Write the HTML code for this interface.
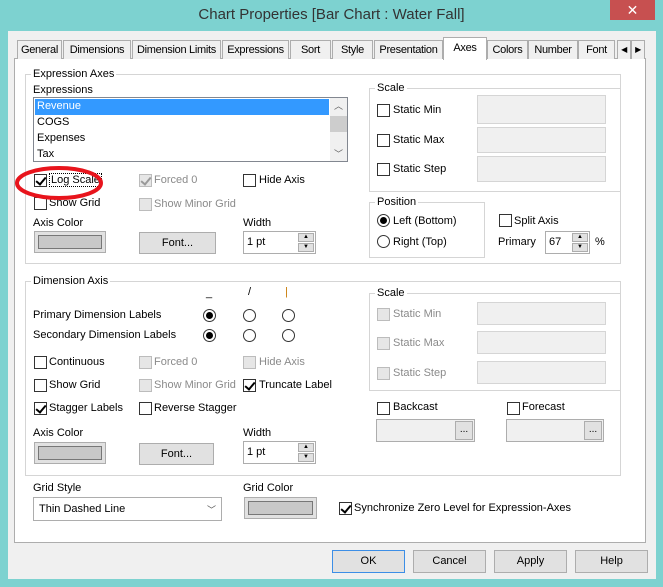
<!DOCTYPE html>
<html><head><meta charset="utf-8"><style>
*{box-sizing:border-box;margin:0;padding:0}
body{width:663px;height:587px;background:#7dd2d0;font-family:"Liberation Sans",Arial,sans-serif;font-size:11px;color:#000;position:relative;overflow:hidden}
.a{position:absolute;white-space:nowrap}
.cb{position:absolute;width:13px;height:13px;border:1px solid #333;background:#fff}
.cb.d{border-color:#bcbcbc;background:#e6e6e6}
.ck::after{content:"";position:absolute;left:3px;top:0px;width:4px;height:8px;border:solid #000;border-width:0 2px 2px 0;transform:rotate(40deg)}
.cb.d.ck::after{border-color:#999}
.g{color:#8a8a8a}
.grp{position:absolute;border:1px solid #d5d5d5}
.lbl{position:absolute;background:#fff;padding:0 2px;top:-7px;left:5px;white-space:nowrap}
.fld{position:absolute;background:#f0f0f0;border:1px solid #d5d5d5}
.btn{position:absolute;background:#e1e1e1;border:1px solid #adadad;text-align:center;line-height:20px;white-space:nowrap}
.rd{position:absolute;width:13px;height:13px;border:1px solid #333;border-radius:50%;background:#fff}
.rd.on::after{content:"";position:absolute;left:2px;top:2px;width:7px;height:7px;border-radius:50%;background:#000}
.tab{position:absolute;top:40px;height:19px;background:#f0f0f0;border:1px solid #adadad;border-bottom:none;text-align:center;line-height:18px;white-space:nowrap;letter-spacing:-0.3px;overflow:hidden}
.spin{position:absolute;background:#fff;border:1px solid #adadad}
.sp{position:absolute;right:1px;width:16px;height:9px;background:#e1e1e1;border:1px solid #adadad;font-size:6px;line-height:7px;text-align:center}
.cbox{position:absolute;background:#e1e1e1;border:1px solid #adadad}
.cbox::after{content:"";position:absolute;left:3px;top:3px;right:3px;bottom:3px;background:#c8c8c8;border:1px solid #777}
</style></head><body>
<div class="a" style="left:0;top:6px;width:663px;text-align:center;font-size:15px;color:#333">Chart Properties [Bar Chart : Water Fall]</div>
<div class="a" style="left:610px;top:0;width:45px;height:20px;background:#c75050;color:#fff;text-align:center;font-size:14px;line-height:20px">✕</div>
<div class="a" style="left:8px;top:31px;width:648px;height:548px;background:#f0f0f0"></div>
<div class="a" style="left:14px;top:58px;width:632px;height:485px;background:#fff;border:1px solid #adadad"></div>
<div class="tab" style="left:17px;width:45px">General</div>
<div class="tab" style="left:63px;width:68px">Dimensions</div>
<div class="tab" style="left:132px;width:89px">Dimension Limits</div>
<div class="tab" style="left:222px;width:67px">Expressions</div>
<div class="tab" style="left:290px;width:41px">Sort</div>
<div class="tab" style="left:332px;width:41px">Style</div>
<div class="tab" style="left:374px;width:69px">Presentation</div>
<div class="tab" style="left:443px;top:37px;height:23px;width:44px;background:#fff;line-height:20px">Axes</div>
<div class="tab" style="left:487px;width:41px">Colors</div>
<div class="tab" style="left:528px;width:50px">Number</div>
<div class="tab" style="left:578px;width:37px">Font</div>
<div class="tab" style="left:617px;width:14px;font-size:8px">◀</div>
<div class="tab" style="left:631px;width:14px;font-size:8px">▶</div>

<div class="grp" style="left:25px;top:74px;width:596px;height:190px"><span class="lbl">Expression Axes</span></div>
<div class="a" style="left:33px;top:84px">Expressions</div>
<div class="a" style="left:33px;top:97px;width:315px;height:65px;border:1px solid #828790;background:#fff"></div>
<div class="a" style="left:35px;top:99px;width:294px;height:16px;background:#3399ff"></div>
<div class="a" style="left:37px;top:100px;color:#fff">Revenue</div>
<div class="a" style="left:37px;top:116px">COGS</div>
<div class="a" style="left:37px;top:132px">Expenses</div>
<div class="a" style="left:37px;top:148px">Tax</div>
<div class="a" style="left:330px;top:98px;width:17px;height:63px;background:#f0f0f0"></div>
<div class="a" style="left:330px;top:116px;width:17px;height:16px;background:#cdcdcd"></div>
<div class="a" style="left:334px;top:99px;font-size:9px;color:#606060">︿</div>
<div class="a" style="left:334px;top:147px;font-size:9px;color:#606060">﹀</div>

<div class="cb ck" style="left:34px;top:174px"></div><div class="a" style="left:49px;top:173px;border:1px dotted #000;padding:0 1px">Log Scale</div>
<div class="cb d ck" style="left:139px;top:174px"></div><div class="a g" style="left:154px;top:174px">Forced 0</div>
<div class="cb" style="left:243px;top:174px"></div><div class="a" style="left:259px;top:174px">Hide Axis</div>
<div class="cb" style="left:34px;top:197px"></div><div class="a" style="left:49px;top:197px">Show Grid</div>
<div class="cb d" style="left:139px;top:198px"></div><div class="a g" style="left:154px;top:198px">Show Minor Grid</div>
<svg class="a" style="left:13px;top:164px" width="92" height="38"><ellipse cx="46" cy="19" rx="42" ry="15" fill="none" stroke="#e8141c" stroke-width="4"/></svg>
<div class="a" style="left:33px;top:217px">Axis Color</div>
<div class="cbox" style="left:34px;top:231px;width:72px;height:22px"></div>
<div class="btn" style="left:139px;top:232px;width:77px;height:22px">Font...</div>
<div class="a" style="left:243px;top:217px">Width</div>
<div class="spin" style="left:243px;top:231px;width:73px;height:23px"><span class="a" style="left:3px;top:4px">1 pt</span><div class="sp" style="top:1px">▲</div><div class="sp" style="top:11px">▼</div></div>

<div class="grp" style="left:369px;top:88px;width:252px;height:104px"><span class="lbl">Scale</span></div>
<div class="cb" style="left:377px;top:104px"></div><div class="a" style="left:393px;top:104px">Static Min</div>
<div class="fld" style="left:477px;top:95px;width:129px;height:29px"></div>
<div class="cb" style="left:377px;top:134px"></div><div class="a" style="left:393px;top:134px">Static Max</div>
<div class="fld" style="left:477px;top:127px;width:129px;height:26px"></div>
<div class="cb" style="left:377px;top:163px"></div><div class="a" style="left:393px;top:163px">Static Step</div>
<div class="fld" style="left:477px;top:156px;width:129px;height:26px"></div>

<div class="grp" style="left:369px;top:202px;width:116px;height:56px"><span class="lbl">Position</span></div>
<div class="rd on" style="left:377px;top:214px"></div><div class="a" style="left:393px;top:215px">Left (Bottom)</div>
<div class="rd" style="left:377px;top:235px"></div><div class="a" style="left:393px;top:236px">Right (Top)</div>
<div class="cb" style="left:499px;top:214px"></div><div class="a" style="left:514px;top:215px">Split Axis</div>
<div class="a" style="left:498px;top:236px">Primary</div>
<div class="spin" style="left:545px;top:231px;width:45px;height:23px"><span class="a" style="left:3px;top:4px">67</span><div class="sp" style="top:1px">▲</div><div class="sp" style="top:11px">▼</div></div>
<div class="a" style="left:595px;top:236px">%</div>

<div class="grp" style="left:25px;top:281px;width:596px;height:195px"><span class="lbl">Dimension Axis</span></div>
<div class="a" style="left:206px;top:287px">_</div><div class="a" style="left:248px;top:286px">/</div><div class="a" style="left:285px;top:286px;color:#c87800">|</div>
<div class="a" style="left:33px;top:309px">Primary Dimension Labels</div>
<div class="a" style="left:33px;top:329px">Secondary Dimension Labels</div>
<div class="rd on" style="left:203px;top:309px"></div><div class="rd" style="left:243px;top:309px"></div><div class="rd" style="left:282px;top:309px"></div>
<div class="rd on" style="left:203px;top:329px"></div><div class="rd" style="left:243px;top:329px"></div><div class="rd" style="left:282px;top:329px"></div>
<div class="cb" style="left:34px;top:356px"></div><div class="a" style="left:49px;top:356px">Continuous</div>
<div class="cb d" style="left:139px;top:356px"></div><div class="a g" style="left:154px;top:356px">Forced 0</div>
<div class="cb d" style="left:243px;top:356px"></div><div class="a g" style="left:259px;top:356px">Hide Axis</div>
<div class="cb" style="left:34px;top:379px"></div><div class="a" style="left:49px;top:379px">Show Grid</div>
<div class="cb d" style="left:139px;top:379px"></div><div class="a g" style="left:154px;top:379px">Show Minor Grid</div>
<div class="cb ck" style="left:243px;top:379px"></div><div class="a" style="left:259px;top:379px">Truncate Label</div>
<div class="cb ck" style="left:34px;top:402px"></div><div class="a" style="left:49px;top:402px">Stagger Labels</div>
<div class="cb" style="left:139px;top:402px"></div><div class="a" style="left:154px;top:402px">Reverse Stagger</div>
<div class="a" style="left:33px;top:427px">Axis Color</div>
<div class="cbox" style="left:34px;top:442px;width:72px;height:22px"></div>
<div class="btn" style="left:139px;top:443px;width:75px;height:22px">Font...</div>
<div class="a" style="left:243px;top:427px">Width</div>
<div class="spin" style="left:243px;top:441px;width:73px;height:23px"><span class="a" style="left:3px;top:4px">1 pt</span><div class="sp" style="top:1px">▲</div><div class="sp" style="top:11px">▼</div></div>

<div class="grp" style="left:369px;top:293px;width:252px;height:98px"><span class="lbl">Scale</span></div>
<div class="cb d" style="left:377px;top:308px"></div><div class="a g" style="left:393px;top:308px">Static Min</div>
<div class="fld" style="left:477px;top:302px;width:129px;height:23px"></div>
<div class="cb d" style="left:377px;top:337px"></div><div class="a g" style="left:393px;top:337px">Static Max</div>
<div class="fld" style="left:477px;top:331px;width:129px;height:23px"></div>
<div class="cb d" style="left:377px;top:367px"></div><div class="a g" style="left:393px;top:367px">Static Step</div>
<div class="fld" style="left:477px;top:361px;width:129px;height:23px"></div>
<div class="cb" style="left:377px;top:402px"></div><div class="a" style="left:393px;top:401px">Backcast</div>
<div class="cb" style="left:507px;top:402px"></div><div class="a" style="left:522px;top:401px">Forecast</div>
<div class="a" style="left:376px;top:419px;width:99px;height:23px;border:1px solid #adadad;background:#f0f0f0"><div class="btn" style="right:1px;top:1px;width:18px;height:19px;line-height:15px;font-size:10px">...</div></div>
<div class="a" style="left:506px;top:419px;width:98px;height:23px;border:1px solid #adadad;background:#f0f0f0"><div class="btn" style="right:1px;top:1px;width:18px;height:19px;line-height:15px;font-size:10px">...</div></div>

<div class="a" style="left:33px;top:482px">Grid Style</div>
<div class="a" style="left:33px;top:497px;width:189px;height:24px;border:1px solid #adadad;background:#fff"><span class="a" style="left:5px;top:5px">Thin Dashed Line</span><span class="a" style="right:5px;top:5px;font-size:9px;color:#555">﹀</span></div>
<div class="a" style="left:243px;top:482px">Grid Color</div>
<div class="cbox" style="left:244px;top:497px;width:73px;height:22px"></div>
<div class="cb ck" style="left:339px;top:502px"></div><div class="a" style="left:354px;top:502px">Synchronize Zero Level for Expression-Axes</div>

<div class="btn" style="left:332px;top:550px;width:73px;height:23px;border-color:#3c8ee6">OK</div>
<div class="btn" style="left:413px;top:550px;width:73px;height:23px">Cancel</div>
<div class="btn" style="left:494px;top:550px;width:73px;height:23px">Apply</div>
<div class="btn" style="left:575px;top:550px;width:73px;height:23px">Help</div>
</body></html>
